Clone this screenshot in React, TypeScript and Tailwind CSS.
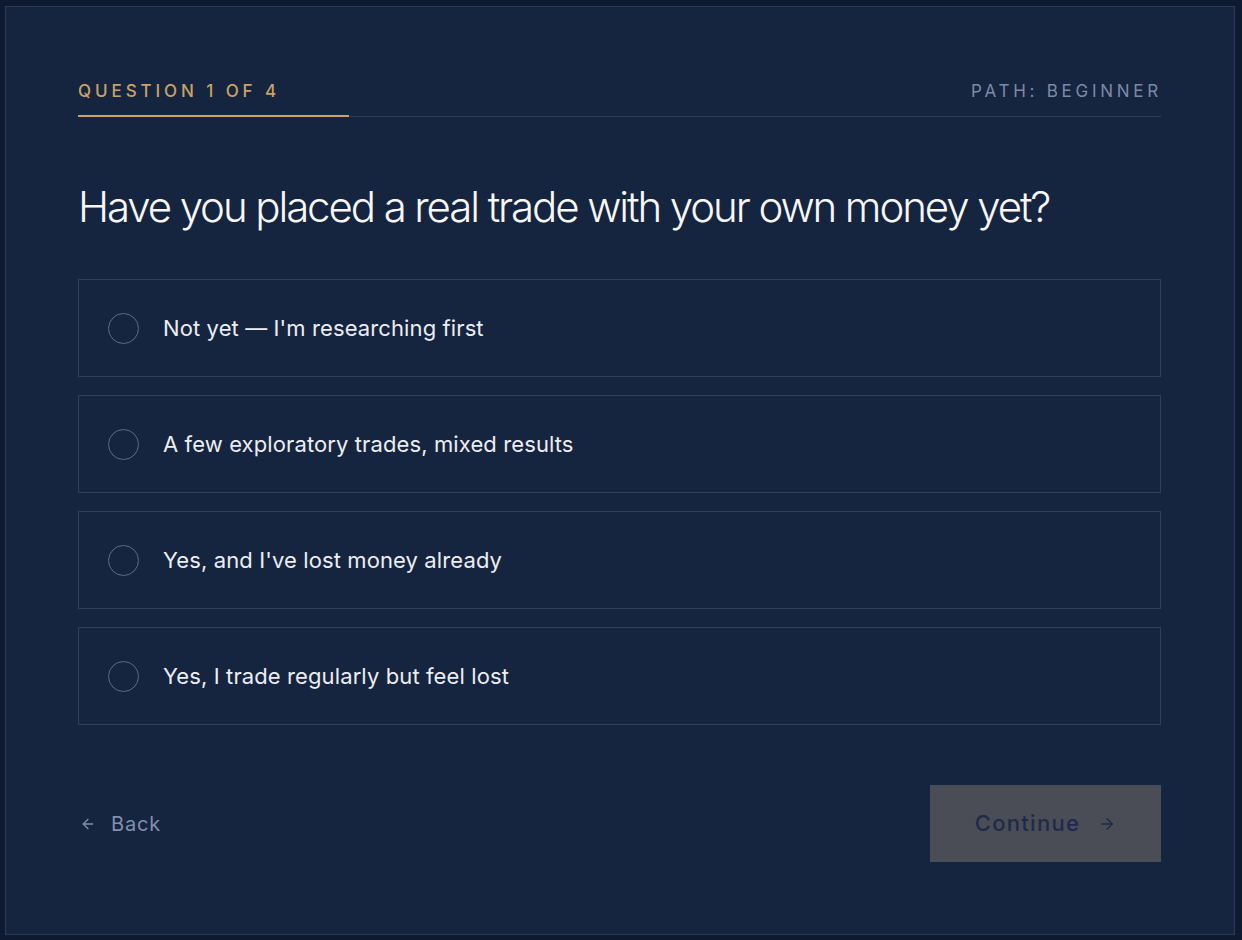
import { useState } from "react";

const options = [
  "Not yet — I'm researching first",
  "A few exploratory trades, mixed results",
  "Yes, and I've lost money already",
  "Yes, I trade regularly but feel lost",
];

function App() {
  const [selected, setSelected] = useState<number | null>(null);

  return (
    <div
      className="min-h-screen bg-[#0e1a2f] pl-[5px] pr-[7px] pt-[6px] pb-[5px]"
      style={{ fontFamily: "Inter, 'Noto Sans', sans-serif" }}
    >
      <div className="h-[929px] border border-[#2a3a58] bg-[#15243f] pl-[72px] pr-[73px] pt-[74px] pb-[72px] flex flex-col">
        {/* Progress header */}
        <div className="relative border-b border-[#2c3c5a] pb-[15px] flex items-center justify-between leading-[20px]">
          <span className="text-[17px] tracking-[0.23em] text-[#c9a265] font-medium">
            QUESTION 1 OF 4
          </span>
          <span className="text-[17px] tracking-[0.22em] text-[#7d8aa5] -mr-[1px]">
            PATH: BEGINNER
          </span>
          <div className="absolute left-0 -bottom-px h-[2px] w-1/4 bg-[#c9a265]" />
        </div>

        {/* Question */}
        <h1 className="mt-[64px] text-[42px] font-light tracking-[-0.05em] text-[#f7f7f8] leading-[52px] whitespace-nowrap">
          Have you placed a real trade with your own money yet?
        </h1>

        {/* Options */}
        <div className="mt-[46px] flex flex-col gap-[18px]">
          {options.map((opt, i) => (
            <button
              key={opt}
              onClick={() => setSelected(i)}
              className="h-[98px] border border-[#2f3f5c] flex items-center pl-[29px] gap-[24px] text-left"
            >
              <span
                className={
                  selected === i
                    ? "w-[31px] h-[31px] rounded-full border-[1.5px] border-[#c9a265] bg-[#c9a265]"
                    : "w-[31px] h-[31px] rounded-full border-[1.5px] border-[#5c6b88]"
                }
              />
              <span className="text-[22px] tracking-[0.005em] text-[#eceef3]">{opt}</span>
            </button>
          ))}
        </div>

        {/* Footer */}
        <div className="mt-auto flex items-center justify-between">
          <button className="flex items-center gap-[15px] pl-[2px] text-[20px] tracking-[0.04em] text-[#8390ab]">
            <svg width="16" height="16" viewBox="0 0 24 24" fill="none" stroke="currentColor" strokeWidth="2" strokeLinecap="round" strokeLinejoin="round">
              <path d="M19 12H5" />
              <path d="M12 19l-7-7 7-7" />
            </svg>
            Back
          </button>
          <button
            disabled
            className="w-[231px] h-[77px] bg-[#4a4d55] flex items-center justify-center gap-[18px] text-[22px] font-medium tracking-[0.06em] text-[#1e2a4c]"
          >
            Continue
            <svg width="18" height="18" viewBox="0 0 24 24" fill="none" stroke="currentColor" strokeWidth="2" strokeLinecap="round" strokeLinejoin="round">
              <path d="M5 12h14" />
              <path d="M12 5l7 7-7 7" />
            </svg>
          </button>
        </div>
      </div>
    </div>
  );
}

export default App;
